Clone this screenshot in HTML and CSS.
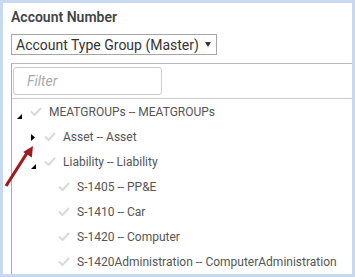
FILE: index.html
```html
<!DOCTYPE html>
<html lang="en">
<head>
  <meta charset="UTF-8">
  <title>Account Number</title>
  <link rel="stylesheet" href="styles.css">
</head>
<body>
  <div class="frame">
    <h2 class="title">Account Number</h2>
    <div class="select">
      <span>Account Type Group (Master)</span>
      <svg class="caret" width="6" height="5" viewBox="0 0 6 5"><polygon points="0,0 6,0 3,5" fill="#333"/></svg>
    </div>

    <div class="panel">
      <div class="filter">
        <input type="text" placeholder="Filter">
      </div>
      <div class="tree">
        <div class="row lvl0">
          <span class="toggle"><svg width="6" height="14" viewBox="0 0 6 14"><polygon points="0,14 5,14 5,9" fill="#000"/></svg></span>
          <span class="check"><svg width="12" height="9" viewBox="0 0 12 9"><path d="M1 4.5 L4.5 8 L11 1" /></svg></span>
          <span class="label">MEATGROUPs -- MEATGROUPs</span>
        </div>
        <div class="row lvl1">
          <span class="toggle"><svg class="closed" width="4" height="7" viewBox="0 0 4 7"><polygon points="0,0 4,3.5 0,7" fill="#000"/></svg></span>
          <span class="check"><svg width="12" height="9" viewBox="0 0 12 9"><path d="M1 4.5 L4.5 8 L11 1" /></svg></span>
          <span class="label">Asset -- Asset</span>
        </div>
        <div class="row lvl1">
          <span class="toggle"><svg width="6" height="14" viewBox="0 0 6 14"><polygon points="0,14 5,14 5,9" fill="#000"/></svg></span>
          <span class="check"><svg width="12" height="9" viewBox="0 0 12 9"><path d="M1 4.5 L4.5 8 L11 1" /></svg></span>
          <span class="label">Liability -- Liability</span>
        </div>
        <div class="row lvl2">
          <span class="toggle"></span>
          <span class="check"><svg width="12" height="9" viewBox="0 0 12 9"><path d="M1 4.5 L4.5 8 L11 1" /></svg></span>
          <span class="label">S-1405 -- PP&amp;E</span>
        </div>
        <div class="row lvl2">
          <span class="toggle"></span>
          <span class="check"><svg width="12" height="9" viewBox="0 0 12 9"><path d="M1 4.5 L4.5 8 L11 1" /></svg></span>
          <span class="label">S-1410 -- Car</span>
        </div>
        <div class="row lvl2">
          <span class="toggle"></span>
          <span class="check"><svg width="12" height="9" viewBox="0 0 12 9"><path d="M1 4.5 L4.5 8 L11 1" /></svg></span>
          <span class="label">S-1420 -- Computer</span>
        </div>
        <div class="row lvl2">
          <span class="toggle"></span>
          <span class="check"><svg width="12" height="9" viewBox="0 0 12 9"><path d="M1 4.5 L4.5 8 L11 1" /></svg></span>
          <span class="label">S-1420Administration -- ComputerAdministration</span>
        </div>
      </div>
    </div>
  </div>

  <!-- callout arrow drawn over the tree -->
  <svg class="arrow" width="40" height="55" viewBox="0 140 40 55">
    <line x1="6" y1="186" x2="27" y2="153" stroke="#a01b21" stroke-width="3.2"/>
    <polygon points="33,146 31.8,157.5 23.2,152" fill="#a01b21"/>
  </svg>
</body>
</html>
```

FILE: styles.css
```css
body {
  margin: 0;
  padding: 3px;
  background: #c6d9f0;
  font-family: Roboto, 'Liberation Sans', sans-serif;
}
.frame {
  background: #fff;
  height: 271px;
  padding: 5px 0 0 8px;
  box-sizing: border-box;
  overflow: hidden;
}
.title {
  margin: 0;
  font-size: 14px;
  line-height: 18px;
  font-weight: 600;
  color: #444;
}
.select {
  margin-top: 8px;
  width: 206px;
  height: 21px;
  box-sizing: border-box;
  border: 1px solid #a6a6a6;
  padding: 0 4px;
  display: flex;
  align-items: center;
  justify-content: space-between;
  font-size: 14px;
  color: #333;
}
.caret { margin-right: 1px; }
.panel {
  margin-top: 8px;
  border-top: 1px solid #bbb;
  border-left: 1px solid #aaa;
  height: 220px;
}
.filter {
  padding: 3px 0 3px 1px;
  border-bottom: 1px solid #ccc;
}
.filter input {
  width: 149px;
  height: 28px;
  box-sizing: border-box;
  border: 1px solid #ccc;
  border-radius: 3px;
  padding: 0 0 0 13px;
  font: italic 14px Roboto, sans-serif;
  outline: none;
}
.filter input::placeholder { color: #aaa; }
.row {
  height: 25px;
  display: flex;
  align-items: center;
  font-size: 12px;
  color: #555;
  white-space: nowrap;
}
.lvl0 { padding-left: 4px; }
.lvl1 { padding-left: 18px; }
.lvl2 { padding-left: 32px; }
.toggle {
  flex: none;
  width: 13px;
  padding-left: 1px;
  box-sizing: border-box;
  display: flex;
  align-items: center;
}
.toggle .closed { margin-top: 2px; }
.check {
  flex: none;
  width: 14px;
  display: flex;
  justify-content: center;
}
.check path {
  fill: none;
  stroke: #d9d9d9;
  stroke-width: 2;
}
.label { margin-left: 6px; }
.arrow {
  position: absolute;
  left: 0;
  top: 140px;
}
```
